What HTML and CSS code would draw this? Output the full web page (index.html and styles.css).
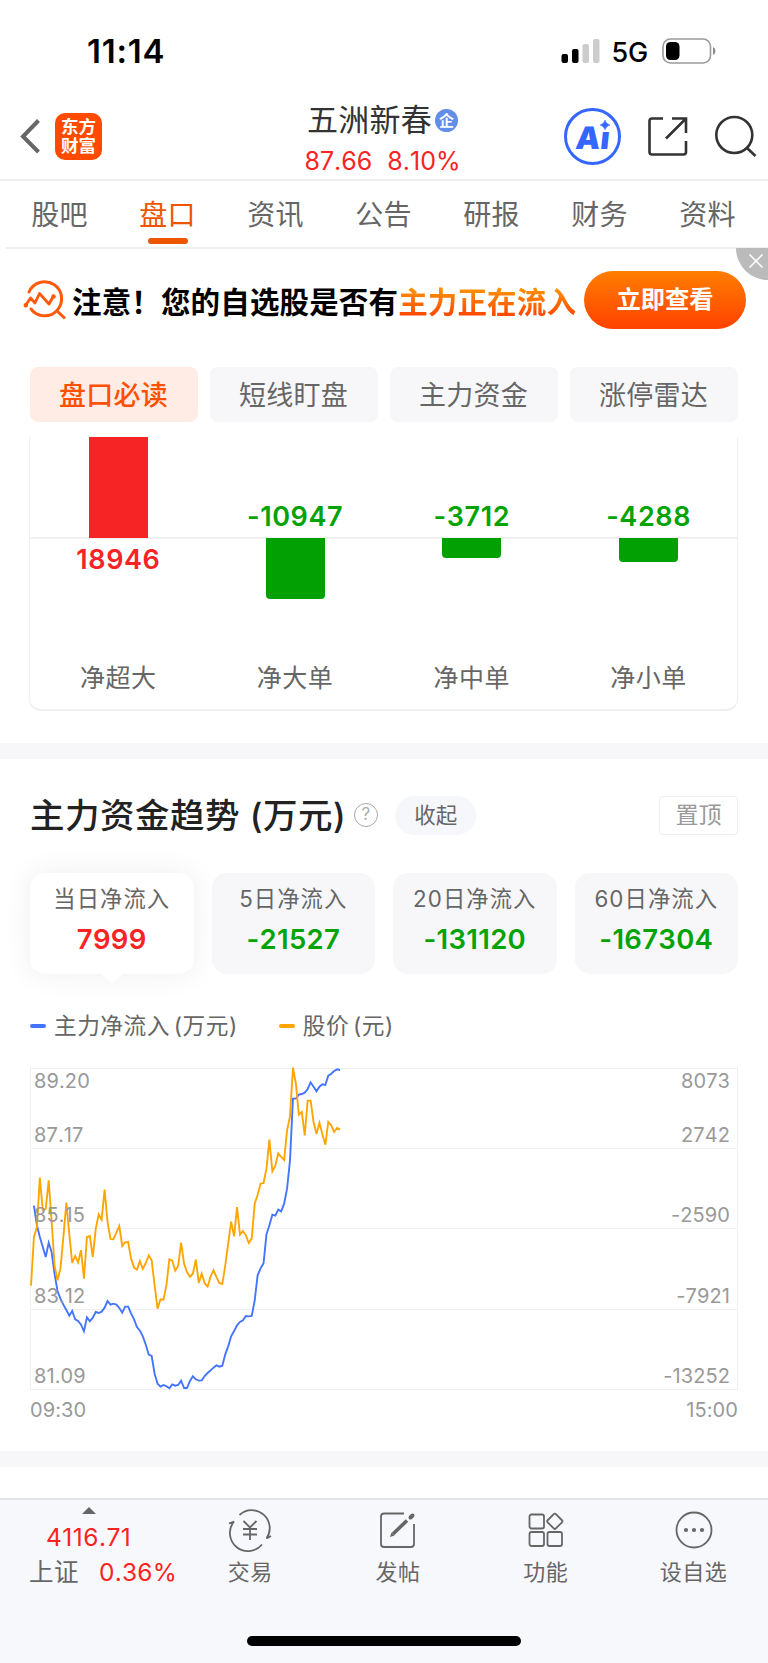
FILE: index.html
```html
<!DOCTYPE html>
<html lang="zh-CN">
<head>
<meta charset="UTF-8" />
<meta name="viewport" content="width=device-width, initial-scale=1" />
<title>五洲新春 - 盘口</title>
<link rel="stylesheet" href="styles.css">
</head>
<body>

<div class="status-bar">
  <span class="time">11:14</span>
  <div class="status-right">
    <svg class="signal" width="40" height="26" viewBox="0 0 40 26">
      <rect x="0.5" y="16" width="6.5" height="9" rx="2" fill="#000"/>
      <rect x="11" y="11" width="6.5" height="14" rx="2" fill="#000"/>
      <rect x="21.5" y="6" width="6.5" height="19" rx="2" fill="#ccc"/>
      <rect x="32" y="1" width="6.5" height="24" rx="2" fill="#ccc"/>
    </svg>
    <span class="network">5G</span>
    <svg class="battery" width="56" height="26" viewBox="0 0 56 26">
      <rect x="1" y="1" width="47.5" height="24" rx="7.5" fill="none" stroke="#9a9a9a" stroke-width="1.6"/>
      <rect x="4" y="4" width="13.5" height="18" rx="4.5" fill="#000"/>
      <path d="M51 9v8c3.2-1.2 3.2-6.8 0-8z" fill="#8a8a8a"/>
    </svg>
  </div>
</div>

<header class="header">
  <div class="header-left">
    <svg width="20" height="35" viewBox="0 0 20 35" fill="none" stroke="#666" stroke-width="4">
      <path d="M18.500 1.500L3 17.500L18.500 33"/>
    </svg>
    <div class="logo"><span>东方</span><span>财富</span></div>
  </div>
  <div class="stock">
    <div class="stock-name">五洲新春<span class="badge">企</span></div>
    <div class="stock-price"><span>87.66</span><span>8.10%</span></div>
  </div>
  <div class="header-right">
    <div class="ai">
      <span>Aı</span>
      <svg class="spark" width="10" height="10" viewBox="0 0 10 10"><path d="M5 0Q6 4 10 5Q6 6 5 10Q4 6 0 5Q4 4 5 0z" fill="#3566ff" stroke="#3566ff" stroke-width="0.5"/></svg>
    </div>
    <svg width="42" height="42" viewBox="0 0 42 42" fill="none" stroke="#333" stroke-width="2.6">
      <path d="M16 2.500H5q-2.500 0-2.500 2.500V36q0 2.500 2.500 2.500H36.500q2.500 0 2.500-2.500V25"/>
      <path d="M25 2.500H39V17M38.500 3L19 22.500"/>
    </svg>
    <svg width="42" height="42" viewBox="0 0 42 42" fill="none" stroke="#333" stroke-width="2.6">
      <circle cx="19.3" cy="19" r="18"/>
      <path d="M31.500 31.500L40.500 40"/>
    </svg>
  </div>
</header>

<nav class="tabs">
  <a class="tab">股吧</a>
  <a class="tab active">盘口</a>
  <a class="tab">资讯</a>
  <a class="tab">公告</a>
  <a class="tab">研报</a>
  <a class="tab">财务</a>
  <a class="tab">资料</a>
</nav>

<div class="banner">
  <svg width="44" height="42" viewBox="0 0 44 42" fill="none" stroke="#ff5a0a" stroke-width="3">
    <path d="M6 13A17 17 0 1 1 8 30" stroke-linecap="round"/>
    <path d="M33 31L42 39.500"/>
    <path d="M2.500 26.500L7.500 19L12 24L16.500 14.500L26 25L30.500 17" stroke-width="2.8" stroke-linejoin="round"/>
    <circle cx="2.8" cy="26.3" r="2.2" fill="#ff5a0a" stroke="none"/>
    <circle cx="30.5" cy="17.5" r="2.2" fill="#ff5a0a" stroke="none"/>
  </svg>
  <p class="banner-text">注意！您的自选股是否有<em>主力正在流入</em></p>
  <button class="banner-btn">立即查看</button>
  <div class="banner-close">
    <svg width="14" height="14" viewBox="0 0 14 14" stroke="#fff" stroke-width="1.5"><path d="M.5.5L13.500 13.500M13.500.5L.5 13.500"/></svg>
  </div>
</div>

<div class="pills">
  <div class="pill active">盘口必读</div>
  <div class="pill">短线盯盘</div>
  <div class="pill">主力资金</div>
  <div class="pill">涨停雷达</div>
</div>

<section class="orders">
  <div class="order">
    <div class="above"><i class="bar up" style="height:101px"></i></div>
    <div class="below"><b class="red">18946</b></div>
    <span>净超大</span>
  </div>
  <div class="order">
    <div class="above"><b class="green">-10947</b></div>
    <div class="below"><i class="bar down" style="height:61px"></i></div>
    <span>净大单</span>
  </div>
  <div class="order">
    <div class="above"><b class="green">-3712</b></div>
    <div class="below"><i class="bar down" style="height:20px"></i></div>
    <span>净中单</span>
  </div>
  <div class="order">
    <div class="above"><b class="green">-4288</b></div>
    <div class="below"><i class="bar down" style="height:24px"></i></div>
    <span>净小单</span>
  </div>
</section>

<div class="divider"></div>

<section class="trend">
  <div class="trend-head">
    <h2>主力资金趋势 (万元)</h2>
    <span class="help">?</span>
    <span class="collapse">收起</span>
    <span class="pin">置顶</span>
  </div>

  <div class="cards">
    <div class="card active"><span>当日净流入</span><b class="red">7999</b></div>
    <div class="card"><span>5日净流入</span><b class="green">-21527</b></div>
    <div class="card"><span>20日净流入</span><b class="green">-131120</b></div>
    <div class="card"><span>60日净流入</span><b class="green">-167304</b></div>
  </div>

  <div class="legend">
    <span class="legend-item blue">主力净流入 (万元)</span>
    <span class="legend-item orange">股价 (元)</span>
  </div>

  <div class="chart">
    <svg id="lines" class="lines" width="708" height="322" viewBox="30 23 2124 966"></svg>
    <div class="row first"><span>89.20</span><span>8073</span></div>
    <div class="row"><span>87.17</span><span>2742</span></div>
    <div class="row"><span>85.15</span><span>-2590</span></div>
    <div class="row"><span>83.12</span><span>-7921</span></div>
    <div class="row"><span>81.09</span><span>-13252</span></div>
  </div>
  <div class="times"><span>09:30</span><span>15:00</span></div>
</section>

<div class="divider"></div>

<footer class="footer">
  <div class="toolbar">
    <div class="index">
      <i class="arrow"></i>
      <span class="red point">4116.71</span>
      <div class="index-row"><span>上证</span><span class="red">0.36%</span></div>
    </div>
    <div class="tool">
      <svg width="44" height="40" viewBox="0 0 44 40" fill="none" stroke="#666" stroke-width="1.8">
        <path d="M11.500 5A18 18 0 0 1 38.500 28.500L43 26"/>
        <path d="M34 34.500A18 18 0 0 1 6 11.500L1 13.500"/>
        <path d="M15.500 11L22 17.500L28.500 11M22 17.500V30M15 19H29M15 24.500H29"/>
      </svg>
      <span>交易</span>
    </div>
    <div class="tool">
      <svg width="44" height="40" viewBox="0 0 44 40" fill="none" stroke="#666" stroke-width="1.8">
        <path d="M28 3.500H8q-3 0-3 3V34q0 3 3 3H35q3 0 3-3V14"/>
        <path d="M17 24L31 10.500" stroke-width="3.6"/>
        <path d="M14 27L15.500 22.500L18.500 25.500z" fill="#666" stroke="none"/>
        <path d="M34.500 7.500L36.500 5.500" stroke-width="4" stroke-linecap="round"/>
      </svg>
      <span>发帖</span>
    </div>
    <div class="tool">
      <svg width="44" height="40" viewBox="0 0 44 40" fill="none" stroke="#666" stroke-width="1.8">
        <rect x="5.5" y="4.5" width="14.5" height="14" rx="2"/>
        <rect x="5.5" y="22" width="14.5" height="14" rx="2"/>
        <rect x="23.5" y="22" width="14.5" height="14" rx="2"/>
        <rect x="25" y="5.5" width="11.6" height="11.6" rx="1.5" transform="rotate(45 30.8 11.3)"/>
      </svg>
      <span>功能</span>
    </div>
    <div class="tool">
      <svg width="44" height="40" viewBox="0 0 44 40">
        <circle cx="22" cy="20" r="17.5" fill="none" stroke="#666" stroke-width="1.8"/>
        <g fill="#666"><circle cx="14" cy="20" r="2.1"/><circle cx="22" cy="20" r="2.1"/><circle cx="30" cy="20" r="2.1"/></g>
      </svg>
      <span>设自选</span>
    </div>
  </div>
  <div class="home-bar"></div>
</footer>

<script src="chart.js"></script>
</body>
</html>
```
FILE: styles.css
```css
* {
  box-sizing: border-box;
}
body {
  margin: 0;
  width: 768px;
  height: 1663px;
  overflow: hidden;
  background: #fff;
  color: #666;
  font-family: Inter, "Noto Sans CJK SC", sans-serif;
  font-kerning: none;
  letter-spacing: 0.5px;
  display: flex;
  flex-direction: column;
}
svg {
  display: block;
  flex: none;
  overflow: visible;
}
.red { color: #f92323; }
.green { color: #04a304; }

/* status bar */
.status-bar {
  height: 91px;
  padding: 12px 50px 0 87px;
  display: flex;
  justify-content: space-between;
  align-items: flex-start;
  color: #000;
}
.time {
  font-size: 33px;
  font-weight: 600;
  line-height: 79px;
  letter-spacing: 0.8px;
}
.status-right {
  display: flex;
  align-items: center;
  height: 78px;
}
.network {
  font-size: 27px;
  font-weight: 500;
  margin: 3px 14px 0 11px;
  letter-spacing: -0.2px;
}

/* header */
.header {
  height: 90px;
  border-bottom: 2px solid #eee;
  display: grid;
  grid-template-columns: 256px 256px 256px;
}
.header-left {
  display: flex;
  align-items: center;
  padding: 0 0 1px 20px;
  gap: 15px;
}
.logo {
  width: 47px;
  height: 47px;
  border-radius: 10px;
  background: #ff4a00;
  color: #fff;
  font-size: 17.5px;
  font-weight: 700;
  line-height: 19.5px;
  letter-spacing: 0;
  display: flex;
  flex-direction: column;
  align-items: center;
  justify-content: center;
}
.stock {
  display: flex;
  flex-direction: column;
  align-items: center;
  padding: 9px 3px 0 0;
}
.stock-name {
  display: flex;
  align-items: center;
  font-size: 31px;
  line-height: 40px;
  letter-spacing: 0.3px;
  color: #333;
}
.badge {
  width: 23px;
  height: 23px;
  margin-left: 3px;
  border-radius: 50%;
  background: #628ee8;
  color: #fff;
  font-size: 15px;
  font-weight: 700;
  line-height: 23px;
  letter-spacing: 0;
  text-align: center;
}
.stock-price {
  display: flex;
  gap: 15px;
  font-size: 25px;
  line-height: 42px;
  letter-spacing: 0;
  color: #f92323;
}
.header-right {
  display: flex;
  align-items: center;
  padding: 0 0 0 52px;
}
.header-right > svg {
  margin-right: 26px;
}
.header-right > svg:last-child {
  margin-right: 0;
}
.ai {
  position: relative;
  width: 57px;
  height: 57px;
  margin-right: 26px;
  border: 3px solid #3566ff;
  border-radius: 50%;
  color: #3566ff;
  font-size: 31px;
  font-weight: 900;
  line-height: 53px;
  letter-spacing: 0;
  text-align: center;
}
.ai span {
  display: inline-block;
  transform: skewX(-6deg);
}
.spark {
  position: absolute;
  right: 8px;
  top: 9px;
}

/* tabs */
.tabs {
  display: flex;
  height: 68px;
  margin-left: 6px;
  border-bottom: 2px solid #eee;
}
.tab {
  width: 108px;
  height: 63px;
  padding-right: 1px;
  font-size: 28px;
  line-height: 68px;
  letter-spacing: 0.3px;
  text-align: center;
}
.tab.active {
  color: #ee5500;
}
.tab.active::after {
  content: "";
  display: block;
  width: 40px;
  height: 6px;
  margin: -11px auto 0;
  border-radius: 3px;
  background: #ee5500;
}

/* banner */
.banner {
  position: relative;
  height: 101px;
  padding: 0 22px 0 23px;
  display: flex;
  align-items: center;
}
.banner-text {
  flex: 1;
  margin: 4px 0 0 5px;
  font-size: 29.5px;
  font-weight: 700;
  line-height: 40px;
  letter-spacing: 0.15px;
  white-space: nowrap;
  color: #000;
}
.banner-text em {
  font-style: normal;
  background: linear-gradient(#ff9000 15%, #ff4a00 85%);
  -webkit-background-clip: text;
  background-clip: text;
  color: transparent;
}
.banner-btn {
  width: 162px;
  height: 58px;
  border: none;
  border-radius: 29px;
  padding: 0 0 2px;
  background: linear-gradient(#ff7e00, #ff4200);
  color: #fff;
  font: 700 24.3px/56px Inter, "Noto Sans CJK SC", sans-serif;
}
.banner-close {
  position: absolute;
  right: 0;
  top: -1px;
  width: 32px;
  height: 32px;
  padding: 6px 0 0 13px;
  border-bottom-left-radius: 32px;
  background: #bbb;
}

/* sub tabs */
.pills {
  display: flex;
  gap: 12px;
  padding: 17px 30px 15px;
}
.pill {
  flex: 1;
  height: 55px;
  padding-right: 1px;
  border-radius: 8px;
  background: #f7f7fa;
  font-size: 27px;
  line-height: 57px;
  letter-spacing: 0.3px;
  text-align: center;
}
.pill.active {
  background: #ffede5;
  color: #ff5000;
  font-weight: 500;
}

/* order bars */
.orders {
  display: flex;
  height: 274px;
  margin: 0 30px 32px 29px;
  border: solid #efefef;
  border-width: 0 1px 2px;
  border-radius: 0 0 12px 12px;
}
.order {
  flex: 1;
  text-align: center;
  font-size: 25px;
}
.order b {
  font-size: 27px;
  font-weight: 600;
  line-height: 42px;
  letter-spacing: 0.6px;
}
.above b {
  margin-bottom: -1px;
}
.above {
  height: 102px;
  display: flex;
  justify-content: center;
  align-items: flex-end;
  border-bottom: 2px solid #f0f0f0;
}
.below {
  height: 120px;
  display: flex;
  justify-content: center;
  align-items: flex-start;
}
.bar {
  width: 59px;
}
.up {
  background: #f62424;
  position: relative;
  top: 1px;
}
.down {
  background: #03a003;
  margin-top: -1px;
  border-radius: 0 0 4px 4px;
}
.order > span {
  line-height: 38px;
}
.divider {
  height: 16px;
  background: #f7f7fa;
}

/* capital trend */
.trend {
  height: 692px;
  padding: 36px 30px 0;
}
.trend-head {
  display: flex;
  align-items: center;
  height: 40px;
}
h2 {
  margin: 2px 8px 0 0;
  font-size: 34.5px;
  font-weight: 500;
  line-height: 40px;
  color: #222;
}
.help {
  width: 24px;
  height: 24px;
  border: 1.5px solid #aaa;
  border-radius: 50%;
  color: #aaa;
  font-size: 17px;
  line-height: 21px;
  text-align: center;
}
.collapse {
  width: 81px;
  margin-left: 17px;
  border-radius: 20px;
  background: #f6f7fa;
  font-size: 21.5px;
  line-height: 39px;
  letter-spacing: 0;
  text-align: center;
}
.pin {
  width: 79px;
  margin-left: auto;
  border: 1.5px solid #eee;
  border-radius: 4px;
  color: #999;
  font-size: 23px;
  line-height: 37px;
  letter-spacing: 0;
  text-align: center;
}
.cards {
  display: flex;
  gap: 18px;
  margin-top: 38px;
}
.card {
  flex: 1;
  height: 101px;
  padding-top: 6px;
  border-radius: 15px;
  background: #f7f7fa;
  display: flex;
  flex-direction: column;
  align-items: center;
  font-size: 22.3px;
  line-height: 40px;
  letter-spacing: 1.1px;
}
.card b {
  font-size: 27.5px;
  font-weight: 600;
  letter-spacing: 0.3px;
}
.card.active {
  position: relative;
  background: #fff;
  box-shadow: 0 0 30px rgba(0, 0, 0, 0.07);
}
.card.active::after {
  content: "";
  position: absolute;
  left: 70px;
  top: 100px;
  border: solid transparent;
  border-width: 11px 12px 0;
  border-top-color: #fff;
}
.legend {
  display: flex;
  gap: 41px;
  margin-top: 31px;
  font-size: 22.7px;
  line-height: 42px;
  word-spacing: -3px;
}
.legend-item {
  display: flex;
  align-items: center;
  gap: 8px;
}
.legend-item::before {
  content: "";
  width: 16px;
  height: 4px;
  border-radius: 2px;
}
.blue::before { background: #4274ff; }
.orange::before { background: #ffa500; }
.chart {
  position: relative;
  height: 323px;
  margin-top: 20px;
  border: solid #f0f0f0;
  border-width: 0 1.5px;
}
.lines {
  position: absolute;
  left: -1px;
  top: 1px;
}
.row {
  display: flex;
  justify-content: space-between;
  align-items: flex-end;
  height: 80.4px;
  padding: 0 7px 0 3px;
  border-bottom: 1.5px solid #f0f0f0;
  color: #999;
  font-size: 20px;
  line-height: 26px;
  letter-spacing: 0.1px;
}
.row span {
  /* keeps the labels above the lines */
  position: relative;
}
.row.first {
  height: 1.5px;
  align-items: flex-start;
}
.row.first span {
  margin-top: 1px;
}
.times {
  display: flex;
  justify-content: space-between;
  margin-top: 6px;
  color: #999;
  font-size: 20px;
  line-height: 28px;
  letter-spacing: 0.1px;
}

/* bottom bar */
.footer {
  flex: 1;
  margin-top: 31px;
  border-top: 2px solid #e2e4e8;
  background: #f7f8fb;
}
.toolbar {
  display: flex;
  height: 136px;
}
.index {
  width: 177px;
  padding: 7px 0 0 29px;
  font-size: 24.5px;
  white-space: nowrap;
}
.arrow {
  display: block;
  width: 0;
  margin-left: 53px;
  border: solid transparent;
  border-width: 0 7px 7px;
  border-bottom-color: #666;
}
.point {
  display: block;
  margin-left: 17px;
  line-height: 46px;
}
.index-row {
  display: flex;
  gap: 20px;
  line-height: 24px;
}
.index-row .red {
  letter-spacing: 0.2px;
}
.tool {
  flex: 1;
  padding: 10px 1px 0 0;
  display: flex;
  flex-direction: column;
  align-items: center;
  font-size: 22px;
  line-height: 44px;
}
.home-bar {
  width: 274px;
  height: 10px;
  margin: 0 auto;
  border-radius: 5px;
  background: #000;
}
```
FILE: chart.js
```js
// one value per minute, measured from the top of the chart
const price = [676,530,500,352,450,445,360,480,615,660,625,530,427,520,608,587,606,570,655,530,527,590,505,462,478,388,485,536,537,517,497,557,546,545,595,622,628,602,626,608,585,600,675,745,717,718,675,597,601,631,616,547,610,635,649,640,598,668,640,669,679,649,630,650,668,671,615,550,484,528,440,523,512,525,548,534,430,403,370,368,325,238,333,316,279,290,299,210,168,22,70,163,155,225,121,121,185,221,188,222,253,185,195,215,203,208];
const inflow = [436,495,530,560,590,547,575,640,692,715,733,749,766,752,777,782,793,813,771,783,772,755,758,754,742,722,733,730,733,743,757,739,739,759,777,800,811,828,853,883,887,940,970,979,974,978,984,972,976,974,961,983,983,962,948,957,961,960,947,938,930,922,915,919,916,882,858,828,812,795,785,780,767,768,767,720,645,624,609,522,495,463,466,448,453,430,385,300,115,115,103,101,97,86,66,79,93,79,72,74,46,40,32,27,29];

const svg = document.getElementById('lines');

function drawLine(values, start, color) {
  const line = document.createElementNS('http://www.w3.org/2000/svg', 'polyline');
  line.setAttribute('points', values.map((y, i) => (33 + (i + start) * 8.83).toFixed(1) + ',' + y).join(' '));
  line.setAttribute('fill', 'none');
  line.setAttribute('stroke', color);
  line.setAttribute('stroke-width', 5.6);
  svg.appendChild(line);
}

drawLine(inflow, 1, '#4274ff');
drawLine(price, 0, '#ffa500');
```
